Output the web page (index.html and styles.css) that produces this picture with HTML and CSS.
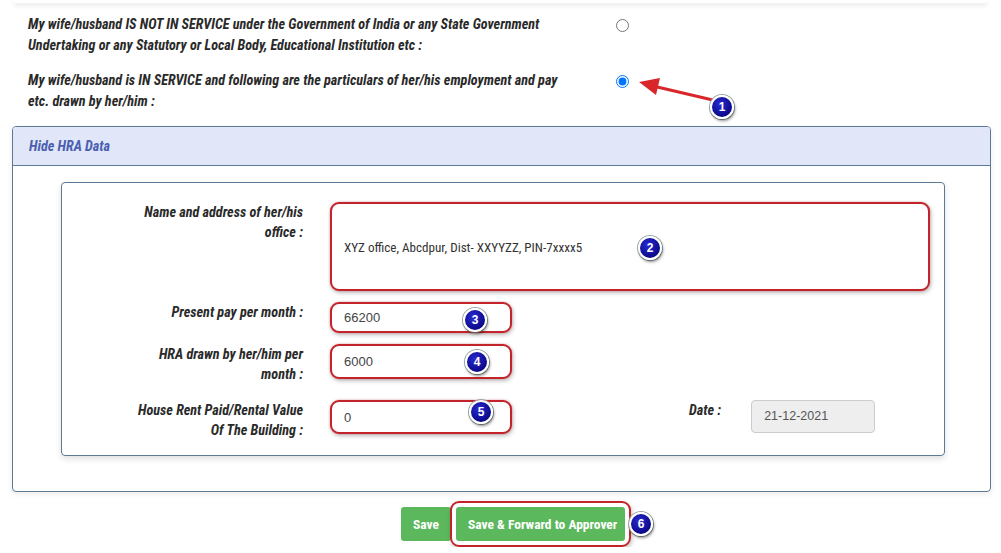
FILE: index.html
```html
<!DOCTYPE html>
<html>
<head>
<meta charset="utf-8">
<link rel="stylesheet" href="styles.css">
</head>
<body>
<div class="prev-card"></div>
<div class="options">
  <div class="opt-row">
    <div class="opt-text">My wife/husband IS NOT IN SERVICE under the Government of India or any State Government Undertaking or any Statutory or Local Body, Educational Institution etc :</div>
    <input class="radio" type="radio" name="svc">
  </div>
  <div class="opt-row">
    <div class="opt-text">My wife/husband is IN SERVICE and following are the particulars of her/his employment and pay etc. drawn by her/him :</div>
    <input class="radio" type="radio" name="svc" checked>
    <svg class="arrow" width="90" height="40" viewBox="0 0 90 40">
      <line x1="84" y1="30" x2="20" y2="15" stroke="#d9262b" stroke-width="3" stroke-linecap="round"/>
      <polygon points="6,11 27,7 23,24" fill="#d9262b"/>
    </svg>
    <span class="badge b1">1</span>
  </div>
</div>

<div class="panel">
  <div class="panel-head">Hide HRA Data</div>
  <div class="panel-body">
    <div class="inner">
      <div class="field">
        <label class="lbl">Name and address of her/his office :</label>
        <div class="ctrl">
          <div class="hl area"><span class="addr">XYZ office, Abcdpur, Dist- XXYYZZ, PIN-7xxxx5</span></div>
          <span class="badge b2">2</span>
        </div>
      </div>
      <div class="field">
        <label class="lbl">Present pay per month :</label>
        <div class="ctrl">
          <div class="hl inp h31">66200</div>
          <span class="badge b3">3</span>
        </div>
      </div>
      <div class="field mb15">
        <label class="lbl">HRA drawn by her/him per month :</label>
        <div class="ctrl">
          <div class="hl inp h35">6000</div>
          <span class="badge b4">4</span>
        </div>
      </div>
      <div class="field last">
        <label class="lbl">House Rent Paid/Rental Value Of The Building :</label>
        <div class="ctrl">
          <div class="hl inp h34">0</div>
          <span class="badge b5">5</span>
        </div>
        <label class="lbl date-lbl">Date :</label>
        <div class="date-inp">21-12-2021</div>
      </div>
    </div>
  </div>
</div>

<div class="actions">
  <button class="btn">Save</button>
  <span class="btn-hl"><button class="btn fwd">Save &amp; Forward to Approver</button></span>
  <span class="badge b6">6</span>
</div>
</body>
</html>
```
FILE: styles.css
```css
* { box-sizing: border-box; }
body {
  margin: 0;
  background: #fff;
  font-family: "Roboto", "Liberation Sans", sans-serif;
  font-stretch: condensed;
  color: #222;
  overflow: hidden;
}
.prev-card {
  height: 3px;
  margin: 0 14px;
  background: #fff;
  box-shadow: 0 2px 5px rgba(0,0,0,0.13);
}
.options {
  padding: 11px 0 0 28px;
}
.opt-row {
  position: relative;
  display: flex;
  align-items: flex-start;
  margin-bottom: 14px;
}
.opt-text {
  width: 540px;
  margin-right: 20px;
  font-size: 14.2px;
  font-weight: bold;
  font-style: italic;
  line-height: 21px;
  color: #2a2a2a;
}
.radio {
  margin: 5px 0 0 28px;
  width: 13px;
  height: 13px;
}
.arrow {
  position: absolute;
  left: 605px;
  top: 1px;
}
.badge {
  position: absolute;
  width: 24px;
  height: 24px;
  border-radius: 50%;
  background: radial-gradient(circle at 40% 35%, #2a2ad0, #0a0a8a 70%);
  border: 2px solid #fff;
  box-shadow: 1px 2px 3px rgba(0,0,0,0.45), 0 0 0 1px #9aa;
  color: #fff;
  font-family: "Liberation Sans", sans-serif;
  font-stretch: normal;
  font-weight: bold;
  font-size: 12px;
  line-height: 20px;
  text-align: center;
}
.b1 { left: 682px; top: 25px; }
.panel {
  margin: 0 10px 0 12px;
  border: 1px solid #5d7a94;
  border-radius: 4px;
  box-shadow: 0 2px 6px rgba(0,0,0,0.08);
}
.panel-head {
  height: 39px;
  background: #e1e6f8;
  border-bottom: 1px solid #5d7a94;
  border-radius: 3px 3px 0 0;
  padding-left: 16px;
  line-height: 38px;
  font-size: 14.2px;
  font-weight: bold;
  font-style: italic;
  color: #4a5fb0;
}
.panel-body {
  padding: 16px 45px 35px 48px;
}
.inner {
  border: 1px solid #5d7a94;
  border-radius: 4px;
  box-shadow: 0 3px 6px rgba(0,0,0,0.12);
  padding: 19px 0 15px 0;
}
.field {
  display: flex;
  align-items: flex-start;
  margin-bottom: 11px;
}
.field.mb15 { margin-bottom: 16px; }
.field.last { margin-bottom: 0; }
.lbl {
  width: 241px;
  text-align: right;
  font-size: 14.2px;
  font-weight: bold;
  font-style: italic;
  line-height: 20px;
  padding: 0 0 0 70px;
  color: #2a2a2a;
}
.ctrl {
  position: relative;
  margin-left: 27px;
}
.hl {
  border: 2px solid #c3242b;
  border-radius: 9px;
  box-shadow: 0 0 2px rgba(195,36,43,0.4), 1px 2px 4px rgba(0,0,0,0.25);
  background: #fff;
  color: #444;
  font-family: "Liberation Sans", sans-serif;
  font-stretch: normal;
  font-size: 13px;
}
.area {
  width: 600px;
  height: 89px;
  display: flex;
  align-items: center;
  padding: 1px 0 0 12px;
}
.addr {
  font-family: "Roboto", "Liberation Sans", sans-serif;
  font-stretch: condensed;
  font-size: 13.1px;
  color: #333;
}
.inp {
  width: 182px;
  padding-left: 12px;
  display: flex;
  align-items: center;
}
.h31 { height: 31px; }
.h35 { height: 35px; }
.h34 { height: 34px; }
.b2 { left: 308px; top: 34px; }
.b3 { left: 133px; top: 6px; }
.b4 { left: 135px; top: 6px; }
.b5 { left: 139px; top: 0; }
.date-lbl {
  width: auto;
  padding: 0;
  margin-left: 177px;
}
.date-inp {
  margin-left: 30px;
  width: 124px;
  height: 33px;
  background: #eee;
  border: 1px solid #ccc;
  border-radius: 4px;
  padding-left: 12px;
  line-height: 31px;
  font-family: "Liberation Sans", sans-serif;
  font-stretch: normal;
  font-size: 12.5px;
  color: #555;
}
.actions {
  position: relative;
  display: flex;
  align-items: center;
  padding: 9px 0 0 401px;
}
.btn {
  height: 34px;
  border: none;
  border-radius: 3px;
  background: #5cb85c;
  color: #fff;
  font-family: "Roboto", "Liberation Sans", sans-serif;
  font-stretch: condensed;
  font-size: 13.5px;
  font-weight: bold;
  padding: 0 12px;
  white-space: nowrap;
}
.btn-hl {
  margin-left: -1px;
  padding: 4px;
  border: 2px solid #c3242b;
  border-radius: 9px;
  box-shadow: 1px 2px 4px rgba(0,0,0,0.25);
  display: flex;
}
.fwd { width: 169px; }
.b6 { left: 629px; top: 20px; }
```
